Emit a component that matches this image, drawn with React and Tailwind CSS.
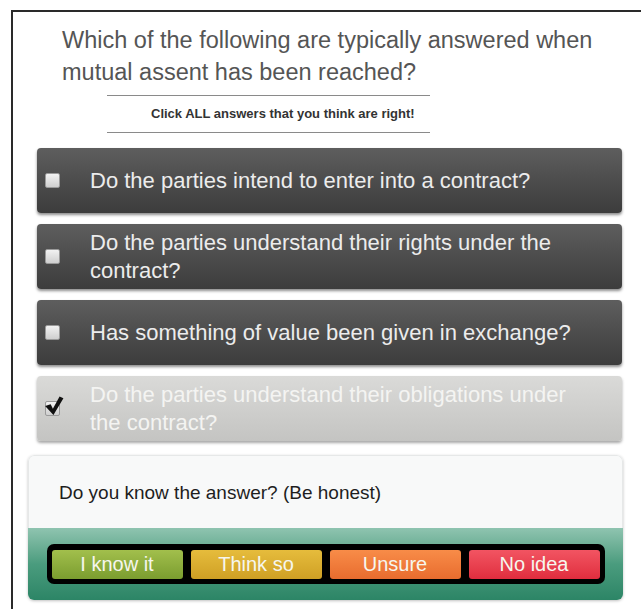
const answers = [
  { text: 'Do the parties intend to enter into a contract?', checked: false },
  { text: 'Do the parties understand their rights under the contract?', checked: false },
  { text: 'Has something of value been given in exchange?', checked: false },
  { text: 'Do the parties understand their obligations under the contract?', checked: true },
]

const ratings = [
  { label: 'I know it', cls: 'bg-gradient-to-b from-[#a2bf4c] to-[#7b9d2f]' },
  { label: 'Think so', cls: 'bg-gradient-to-b from-[#e6bc3c] to-[#cfa024]' },
  { label: 'Unsure', cls: 'bg-gradient-to-b from-[#f88c48] to-[#e86c2e]' },
  { label: 'No idea', cls: 'bg-gradient-to-b from-[#f25462] to-[#e02c3e]' },
]

const font = { fontFamily: '"Liberation Sans", Arial, sans-serif' }

function Checkbox({ checked }) {
  return (
    <div className="relative w-[15px] h-[15px] shrink-0 rounded-[2px] bg-gradient-to-b from-[#f2f2f2] to-[#cfcfcf] border border-[#9a9a9a]">
      {checked && (
        <svg className="absolute -top-[6px] -left-[2px] w-[20px] h-[20px]" viewBox="0 0 18 18">
          <path d="M1 9 L6 7.5 L8 11.5 L14 0.5 L17.5 2 L8.5 17 Z" fill="#111" />
        </svg>
      )}
    </div>
  )
}

function AnswerCard({ text, checked }) {
  return (
    <div
      className={
        'flex items-center h-[65px] rounded-[4px] pl-[8px] pr-4 ' +
        (checked
          ? 'bg-gradient-to-b from-[#dadad8] to-[#c4c4c2] shadow-[0_2px_3px_rgba(0,0,0,0.35)] text-[#f4f4f2]'
          : 'bg-gradient-to-b from-[#5e5e5e] to-[#3c3c3c] shadow-[0_2px_3px_rgba(0,0,0,0.45)] text-[#ececec]')
      }
    >
      <Checkbox checked={checked} />
      <p className="ml-[30px] w-[495px] text-[22px] leading-[28px]" style={font}>{text}</p>
    </div>
  )
}

export default function App() {
  return (
    <div className="w-[641px] h-[609px] bg-white overflow-hidden">
      <div className="ml-[11px] mt-[10px] h-[620px] border-l-2 border-t-2 border-[#2a2a2a]">
        <h1 className="pl-[49px] pt-[12px] text-[23.5px] leading-[32px] text-[#555]" style={font}>
          Which of the following are typically answered when
          <br />
          mutual assent has been reached?
        </h1>

        <div className="ml-[94px] mt-[7px] w-[323px] h-[38px] border-y border-[#8a8a8a] flex items-center pl-[44px]">
          <span className="text-[13px] font-bold text-[#333]" style={font}>Click ALL answers that you think are right!</span>
        </div>

        <div className="ml-[24px] mt-[15px] w-[585px] flex flex-col gap-[11px]">
          {answers.map((a, i) => (
            <AnswerCard key={i} text={a.text} checked={a.checked} />
          ))}
        </div>

        <div className="ml-[15px] mt-[14px] w-[595px] rounded-md overflow-hidden shadow-[0_1px_3px_rgba(0,0,0,0.25)]">
          <div className="h-[73px] bg-[#f8f9f9] border border-b-0 border-[#e6e8e8] rounded-t-md flex items-center pl-[30px]">
            <p className="text-[19px] text-[#1e1e1e] pt-[2px]" style={font}>Do you know the answer? (Be honest)</p>
          </div>
          <div className="h-[72px] bg-gradient-to-b from-[#8fc4b0] via-[#4a9c7e] to-[#2c8566] flex items-center justify-center">
            <div className="w-[558px] h-[40px] bg-black rounded-[7px] px-[5px] flex items-center gap-[8px]">
              {ratings.map((r) => (
                <div
                  key={r.label}
                  className={'flex-1 h-[29px] rounded-[3px] flex items-center justify-center text-[20px] text-[#f6f6ee] ' + r.cls}
                  style={font}
                >
                  {r.label}
                </div>
              ))}
            </div>
          </div>
        </div>
      </div>
    </div>
  )
}
